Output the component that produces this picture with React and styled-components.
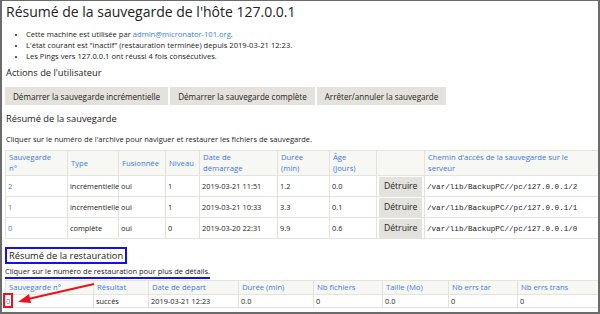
import styled, { createGlobalStyle } from 'styled-components'

// Résumé de la sauvegarde — capture annotée (cadre gris, encadrés bleu/rouge)

const GlobalStyle = createGlobalStyle`
  html, body { margin: 0; padding: 0; background: #fff; }
  body { font-family: "Open Sans", "Liberation Sans", sans-serif; color: #222; }
`

const Frame = styled.div`
  position: relative;
  width: 600px;
  height: 314px;
  box-sizing: border-box;
  border: 2px solid #6b6b6b;
  border-top-width: 1px;
  padding: 0 0 0 3px;
  overflow: hidden;
  background: #fff;
`

const Title = styled.h1`
  margin: 2px 0 0 1px;
  font-size: 14px;
  font-weight: 400;
  line-height: 18px;
  color: #222;
`

const Facts = styled.ul`
  margin: 8px 0 0 0;
  padding-left: 21px;
  font-size: 7.6px;
  line-height: 11px;
  li::marker { font-size: 7px; }
`

const Link = styled.a`
  color: #3b7be8;
  text-decoration: none;
  ${({ $boxed }) => $boxed && `
    display: inline-block;
    border: 2px solid #e8141c;
    padding: 1px 1px 0 1px;
    line-height: 10px;
    margin: -3px 0 -3px -5px;
    vertical-align: top;
  `}
`

const SectionTitle = styled.h2`
  margin: ${({ $m }) => $m || '0'};
  font-size: 9.3px;
  font-weight: 400;
  line-height: 13px;
  color: #222;
  ${({ $boxed }) => $boxed && `
    display: table;
    border: 2px solid #1010f0;
    padding: 0 2px 0 2px;
  `}
`

const Actions = styled.div`
  display: flex;
  gap: 2px;
  margin: 8px 0 0 0;
`

const GreyButton = styled.button`
  height: ${({ $h }) => $h || '18px'};
  padding: 0 ${({ $px }) => $px || '8px'};
  border: none;
  background: #e4e2dc;
  font-family: "Open Sans", "Liberation Sans", sans-serif;
  font-size: ${({ $fs }) => $fs || '8.1px'};
  color: #222;
  cursor: pointer;
`

const Hint = styled.p`
  margin: ${({ $m }) => $m || '0'};
  font-size: 7.5px;
  line-height: 11px;
  ${({ $marked }) => $marked && `
    display: table;
    border-bottom: 2px solid #1010f0;
    line-height: 12px;
  `}
`

const Table = styled.table`
  width: 593px;
  table-layout: fixed;
  border-collapse: collapse;
  font-size: 7.4px;
  th, td {
    border: 1px solid #e3e3dd;
    text-align: left;
    font-weight: 400;
    padding: 0 2px;
    white-space: nowrap;
  }
  th {
    background: #f7f7f3;
    color: #3b7be8;
    vertical-align: middle;
    font-size: 7.7px;
    line-height: 11px;
    padding: 0 3px;
  }
  thead tr { height: ${({ $tight }) => ($tight ? '14px' : '25px')}; }
  tbody tr { height: ${({ $tight }) => ($tight ? '13px' : '21px')}; }
  td { color: #222; }
`

const Col = styled.col`
  width: ${({ $w }) => $w}px;
`

const Path = styled.span`
  font-family: "Liberation Mono", "DejaVu Sans Mono", monospace;
  font-size: 7.6px;
`

const ActionCell = styled.td`
  && { padding: 0 2px; background: #fff; }
`

const Arrow = styled.svg`
  position: absolute;
  left: 0;
  top: 0;
  pointer-events: none;
`

const backups = [
  { n: 2, type: 'incrémentielle', merged: 'oui', level: 1, date: '2019-03-21 11:51', dur: '1.2', age: '0.0' },
  { n: 1, type: 'incrémentielle', merged: 'oui', level: 1, date: '2019-03-21 10:33', dur: '3.3', age: '0.1' },
  { n: 0, type: 'complète', merged: 'oui', level: 0, date: '2019-03-20 22:31', dur: '9.9', age: '0.6' },
]

const backupCols = [62, 51, 47, 34, 78, 52, 47, 48, 174]
const restoreCols = [88, 55, 90, 75, 69, 66, 69, 81]

const App = () => (
  <>
    <GlobalStyle />
    <Frame>
      <Title>Résumé de la sauvegarde de l'hôte 127.0.0.1</Title>
      <Facts>
        <li>Cette machine est utilisée par <Link href="#">admin@micronator-101.org</Link>.</li>
        <li>L'état courant est "inactif" (restauration terminée) depuis 2019-03-21 12:23.</li>
        <li>Les Pings vers 127.0.0.1 ont réussi 4 fois consécutives.</li>
      </Facts>

      <SectionTitle $m="4px 0 0 1px">Actions de l'utilisateur</SectionTitle>
      <Actions>
        <GreyButton>Démarrer la sauvegarde incrémentielle</GreyButton>
        <GreyButton>Démarrer la sauvegarde complète</GreyButton>
        <GreyButton>Arrêter/annuler la sauvegarde</GreyButton>
      </Actions>

      <SectionTitle $m="7px 0 0 1px">Résumé de la sauvegarde</SectionTitle>
      <Hint $m="9px 0 5px 1px">Cliquer sur le numéro de l'archive pour naviguer et restaurer les fichiers de sauvegarde.</Hint>

      <Table>
        <colgroup>
          {backupCols.map((w, i) => <Col key={i} $w={w} />)}
        </colgroup>
        <thead>
          <tr>
            <th>Sauvegarde<br />n°</th>
            <th>Type</th>
            <th>Fusionnée</th>
            <th>Niveau</th>
            <th>Date de<br />démarrage</th>
            <th>Durée<br />(min)</th>
            <th>Âge<br />(jours)</th>
            <th></th>
            <th>Chemin d'accès de la sauvegarde sur le<br />serveur</th>
          </tr>
        </thead>
        <tbody>
          {backups.map(b => (
            <tr key={b.n}>
              <td><Link href="#">{b.n}</Link></td>
              <td>{b.type}</td>
              <td>{b.merged}</td>
              <td>{b.level}</td>
              <td>{b.date}</td>
              <td>{b.dur}</td>
              <td>{b.age}</td>
              <ActionCell><GreyButton $h="19px" $fs="8.6px" $px="5px">Détruire</GreyButton></ActionCell>
              <td><Path>/var/lib/BackupPC//pc/127.0.0.1/{b.n}</Path></td>
            </tr>
          ))}
        </tbody>
      </Table>

      <SectionTitle $boxed $m="8px 0 0 0">Résumé de la restauration</SectionTitle>
      <Hint $marked $m="1px 0 1px 0">Cliquer sur le numéro de restauration pour plus de détails.</Hint>

      <Table $tight>
        <colgroup>
          {restoreCols.map((w, i) => <Col key={i} $w={w} />)}
        </colgroup>
        <thead>
          <tr>
            <th>Sauvegarde n°</th>
            <th>Résultat</th>
            <th>Date de départ</th>
            <th>Durée (min)</th>
            <th>Nb fichiers</th>
            <th>Taille (Mo)</th>
            <th>Nb errs tar</th>
            <th>Nb errs trans</th>
          </tr>
        </thead>
        <tbody>
          <tr>
            <td><Link href="#" $boxed>0</Link></td>
            <td>succès</td>
            <td>2019-03-21 12:23</td>
            <td>0.0</td>
            <td>0</td>
            <td>0.0</td>
            <td>0</td>
            <td>0</td>
          </tr>
        </tbody>
      </Table>

      <Arrow width="600" height="314" viewBox="0 0 600 314">
        <line x1="92" y1="283" x2="26" y2="298" stroke="#e8141c" strokeWidth="2" />
        <polygon points="16,301 27,293 29,302" fill="#e8141c" />
      </Arrow>
    </Frame>
  </>
)

export default App
